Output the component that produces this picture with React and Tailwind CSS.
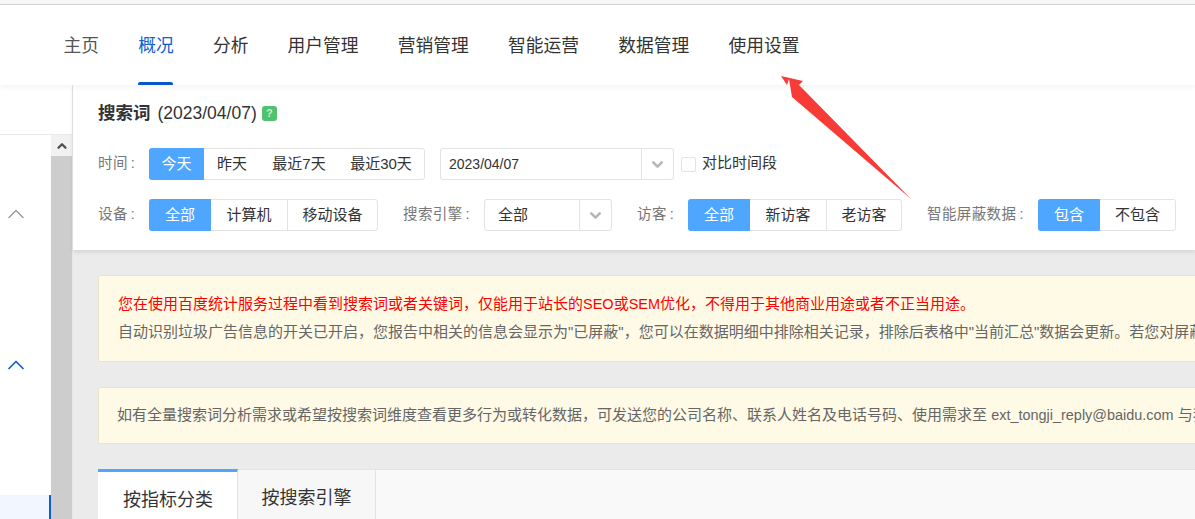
import { ChevronUp, ChevronDown } from "lucide-react";

const font = { fontFamily: '"Liberation Sans", "Noto Sans CJK SC", sans-serif' };
const navItems = ["主页", "概况", "分析", "用户管理", "营销管理", "智能运营", "数据管理", "使用设置"];

function Segment({ items, className = "" }) {
  return (
    <div className={`flex h-8 rounded-[3px] border border-[#e3e3e3] bg-white text-[15px] text-[#333] ${className}`}>
      {items.map((it) => (
        <div
          key={it.label}
          style={{ width: it.w }}
          className={`-my-px flex items-center justify-center first:-ml-px first:rounded-l-[3px] ${it.active ? "bg-[#4ea6ff] text-white" : ""} ${it.line ? "border-l border-[#e3e3e3]" : ""}`}
        >
          {it.label}
        </div>
      ))}
    </div>
  );
}

function Dropdown({ value, w, textClass = "" }) {
  return (
    <div style={{ width: w }} className="flex h-8 items-center rounded-[3px] border border-[#e3e3e3] bg-white text-[#333]">
      <span className={`flex-1 pl-2 ${textClass}`}>{value}</span>
      <span className="flex h-full w-8 items-center justify-center border-l border-[#e3e3e3]">
        <ChevronDown size={17} strokeWidth={3.5} className="text-[#b5b5b5]" />
      </span>
    </div>
  );
}

function Label({ children, className = "" }) {
  return (
    <span className={`-mt-px text-[14.5px] tracking-[0.4px] whitespace-pre text-[#777] ${className}`}>
      {children}
      <span className="ml-[3px]">:</span>
    </span>
  );
}

export default function App() {
  return (
    <div style={font} className="relative h-[519px] w-[1195px] overflow-hidden bg-[#ebebeb]">
      <div className="h-[5px] border-b border-[#d4d4d4] bg-[#f7f7f7]" />

      <header className="relative z-20 flex h-20 gap-[39.2px] bg-white pl-[63.5px] shadow-[0_2px_6px_rgba(0,0,0,0.05)]">
        {navItems.map((item, i) => (
          <div
            key={item}
            className={`relative flex h-full items-center pt-[3px] text-[17.75px] ${i === 1 ? "text-[#0f5fd0]" : i === 0 ? "text-[#555]" : "text-[#333]"}`}
          >
            {item}
            {i === 1 && <span className="absolute right-[1px] bottom-0 left-0 h-[3px] rounded-t-[2px] bg-[#0a57c9]" />}
          </div>
        ))}
      </header>

      <div className="flex h-[434px]">
        <aside className="flex w-[73px] shrink-0 flex-col border-r border-[#e6e6e6] bg-white">
          <div className="h-[50px] shrink-0 border-b border-[#e8e8e8]" />
          <div className="flex min-h-0 flex-1">
            <div className="flex w-[51px] flex-col pt-[65px] pl-[2px]">
              <ChevronUp size={28} strokeWidth={1.2} className="shrink-0 text-[#999]" />
              <ChevronUp size={28} strokeWidth={1.5} className="mt-[123px] shrink-0 text-[#0f5fd0]" />
              <div className="mt-[116px] -ml-[2px] flex-1 border-r-2 border-[#0f5fd0] bg-[#f1f6ff]" />
            </div>
            <div className="flex w-[21px] flex-col bg-[#cdcdcd]">
              <div className="flex h-[21px] items-center justify-center bg-[#f1f1f1]">
                <ChevronUp size={14} strokeWidth={4} className="text-[#505050]" />
              </div>
            </div>
          </div>
        </aside>

        <main className="min-w-0 flex-1">
          <section className="relative z-10 h-[165px] bg-white pt-[16px] pl-[25px] shadow-[0_2px_4px_rgba(0,0,0,0.1)]">
            <div className="flex h-[24px] items-center text-[17.5px] text-[#333]">
              <b>搜索词</b>
              <span className="ml-[7px]">(2023/04/07)</span>
              <span className="ml-[5px] flex h-[15px] w-[15px] items-center justify-center rounded-[3px] bg-[#4fc16f] text-[11px] font-bold text-[#c9efd4]">?</span>
            </div>

            <div className="mt-[23px] flex h-8 items-center">
              <Label className="w-[51px]">时间</Label>
              <Segment
                items={[
                  { label: "今天", w: 55, active: true },
                  { label: "昨天", w: 56 },
                  { label: "最近7天", w: 78 },
                  { label: "最近30天", w: 86 },
                ]}
              />
              <div className="ml-[15px]">
                <Dropdown value="2023/04/07" w={234} textClass="text-sm" />
              </div>
              <span className="ml-[7px] h-[15px] w-[15px] rounded-[2px] border border-[#e3e3e3] bg-white" />
              <span className="ml-[6px] -mt-[1px] text-[15px] text-[#333]">对比时间段</span>
            </div>

            <div className="mt-[19px] flex h-8 items-center">
              <Label className="w-[51px]">设备</Label>
              <Segment
                items={[
                  { label: "全部", w: 62, active: true },
                  { label: "计算机", w: 76 },
                  { label: "移动设备", w: 90, line: true },
                ]}
              />
              <Label className="ml-[25px] w-[81px]">搜索引擎</Label>
              <div className="text-[15px]">
                <Dropdown value="全部" w={128} textClass="pl-[13px]" />
              </div>
              <Label className="ml-[25px] w-[51px]">访客</Label>
              <Segment
                items={[
                  { label: "全部", w: 62, active: true },
                  { label: "新访客", w: 76 },
                  { label: "老访客", w: 75, line: true },
                ]}
              />
              <Label className="ml-[25px] w-[111px]">智能屏蔽数据</Label>
              <Segment
                items={[
                  { label: "包含", w: 62, active: true },
                  { label: "不包含", w: 75 },
                ]}
              />
            </div>
          </section>

          <div className="-mr-[400px] pt-[25px] pl-[25px] text-[15px] whitespace-nowrap">
            <div className="h-[87px] border border-[#e9e4cc] bg-[#fffae5] pt-[14px] pl-[19px] leading-[28px] text-[#666]">
              <p className="text-[#ff0000]">
                您在使用百度统计服务过程中看到搜索词或者关键词，仅能用于站长的<span className="text-[14.5px]">SEO</span>或<span className="text-[14.5px]">SEM</span>优化，不得用于其他商业用途或者不正当用途。
              </p>
              <p>自动识别垃圾广告信息的开关已开启，您报告中相关的信息会显示为"已屏蔽"，您可以在数据明细中排除相关记录，排除后表格中"当前汇总"数据会更新。若您对屏蔽规则</p>
            </div>
            <div className="mt-[25px] flex h-[57px] items-center border border-[#e9e4cc] bg-[#fffae5] pl-[18px] text-[#666]">
              <span>
                如有全量搜索词分析需求或希望按搜索词维度查看更多行为或转化数据，可发送您的公司名称、联系人姓名及电话号码、使用需求至 <span className="text-[14.45px]">ext_tongji_reply@baidu.com</span> 与我们
              </span>
            </div>
            <div className="mt-[25px] flex h-[60px] border-t border-[#e3e3e3] bg-[#f9f9f9] text-[18px] text-[#333]">
              <div className="-mt-px flex h-full w-[140px] items-center justify-center border-t-[3px] border-r border-[#4ea6ff] border-r-[#e3e3e3] bg-white pl-[1px]">按指标分类</div>
              <div className="flex h-full w-[138px] items-center justify-center border-r border-[#e3e3e3] bg-[#f7f7f7] pb-[3px]">按搜索引擎</div>
            </div>
          </div>
        </main>
      </div>

      <svg className="absolute top-0 left-0 z-30" width="1195" height="519" viewBox="0 0 1195 519" fill="none">
        <path d="M781 76 L803 81 L799 85 L911 199 L792 97 L789 79 L787 85 Z" fill="#f73b37" />
      </svg>
    </div>
  );
}
